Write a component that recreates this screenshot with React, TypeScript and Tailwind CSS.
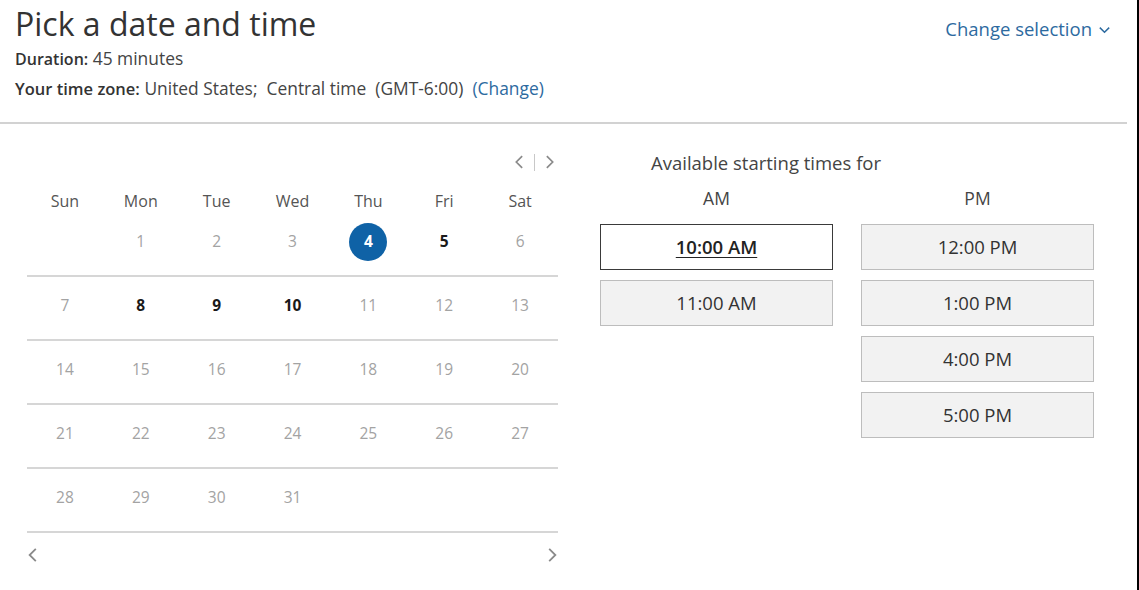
const days = ["Sun", "Mon", "Tue", "Wed", "Thu", "Fri", "Sat"];

type Cell = { n?: number; state?: "off" | "on" | "sel" };

const weeks: Cell[][] = [
  [{}, { n: 1 }, { n: 2 }, { n: 3 }, { n: 4, state: "sel" }, { n: 5, state: "on" }, { n: 6 }],
  [{ n: 7 }, { n: 8, state: "on" }, { n: 9, state: "on" }, { n: 10, state: "on" }, { n: 11 }, { n: 12 }, { n: 13 }],
  [{ n: 14 }, { n: 15 }, { n: 16 }, { n: 17 }, { n: 18 }, { n: 19 }, { n: 20 }],
  [{ n: 21 }, { n: 22 }, { n: 23 }, { n: 24 }, { n: 25 }, { n: 26 }, { n: 27 }],
  [{ n: 28 }, { n: 29 }, { n: 30 }, { n: 31 }, {}, {}, {}],
];

const am = ["10:00 AM", "11:00 AM"];
const pm = ["12:00 PM", "1:00 PM", "4:00 PM", "5:00 PM"];

function Chevron({ dir, className }: { dir: "left" | "right" | "down"; className?: string }) {
  const d =
    dir === "left" ? "M10.5 2.5 L5 8 L10.5 13.5" : dir === "right" ? "M5.5 2.5 L11 8 L5.5 13.5" : "M3 6 L8 11 L13 6";
  return (
    <svg viewBox="0 0 16 16" className={className} fill="none" stroke="currentColor" strokeWidth={1.6}>
      <path d={d} />
    </svg>
  );
}

function TimeButton({ label, selected }: { label: string; selected?: boolean }) {
  return (
    <button
      className={
        selected
          ? "h-[46px] w-[233px] border border-[#3a3a3a] bg-white text-[18.5px] font-semibold text-[#222] underline underline-offset-[3px]"
          : "h-[46px] w-[233px] border border-[#bdbdbd] bg-[#f2f2f2] text-[18.5px] text-[#333]"
      }
    >
      {label}
    </button>
  );
}

export default function App() {
  return (
    <div className="h-[590px] w-[1139px] overflow-hidden border-r-2 border-black bg-white font-['Open_Sans',sans-serif] text-[#333]">
      <header className="flex justify-between pl-[15px] pr-[25px] pt-[3px]">
        <div>
          <h1 className="text-[32px] leading-[42px] text-[#333]">Pick a date and time</h1>
          <p className="mt-[1px] text-[17.4px] leading-[24px] text-[#444]">
            <span className="text-[16px] font-semibold text-[#333]">Duration:</span> 45 minutes
          </p>
          <p className="mt-[5px] whitespace-pre text-[17.4px] leading-[24px] text-[#444]">
            <span className="text-[16.5px] font-semibold text-[#333]">Your time zone:</span>
            {" United States;  Central time  (GMT-6:00)  "}
            <span className="text-[#2d6a9f]">(Change)</span>
          </p>
        </div>
        <div className="mt-[14px] flex h-[24px] items-center gap-[5px] text-[18.5px] text-[#2d6a9f]">
          <span>Change selection</span>
          <Chevron dir="down" className="h-[15px] w-[15px]" />
        </div>
      </header>

      <div className="mr-[10px] mt-[21px] h-[2px] bg-[#d2d2d2]" />

      <main className="flex pt-[27px]">
        <section className="ml-[27px] w-[531px]">
          <div className="-mt-[1px] flex h-[24px] items-center justify-end gap-[6px] text-[#8a8a8a]">
            <Chevron dir="left" className="h-[22px] w-[17px]" />
            <span className="h-[17px] w-px bg-[#c8c8c8]" />
            <Chevron dir="right" className="h-[22px] w-[17px]" />
          </div>
          <div className="mt-[15px] grid h-[24px] grid-cols-7 items-center text-center text-[16px] text-[#555]">
            {days.map((d) => (
              <span key={d}>{d}</span>
            ))}
          </div>
          {weeks.map((w, i) => (
            <div key={i} className="grid h-[64px] grid-cols-7 border-b-2 border-[#d6d6d6] pb-[5px] text-[15.5px]">
              {w.map((c, j) => (
                <div key={j} className="flex items-center justify-center">
                  {c.n === undefined ? null : c.state === "sel" ? (
                    <span className="flex h-[38px] w-[38px] items-center justify-center rounded-full bg-[#0f62a6] font-bold text-white">
                      {c.n}
                    </span>
                  ) : c.state === "on" ? (
                    <span className="font-bold text-[#1a1a1a]">{c.n}</span>
                  ) : (
                    <span className="text-[#a3a3a3]">{c.n}</span>
                  )}
                </div>
              ))}
            </div>
          ))}
          <div className="flex h-[44px] items-center justify-between text-[#8a8a8a]">
            <Chevron dir="left" className="-ml-[3px] h-[22px] w-[18px]" />
            <Chevron dir="right" className="-mr-[3px] h-[22px] w-[18px]" />
          </div>
        </section>

        <section className="ml-[42px]">
          <p className="ml-[51px] h-[24px] text-[18.5px] leading-[24px] text-[#444]">Available starting times for</p>
          <div className="mt-[12px] flex gap-[28px]">
            <div className="flex w-[233px] flex-col gap-[10px]">
              <p className="mb-[5px] text-center text-[17.5px] leading-[22px] text-[#444]">AM</p>
              {am.map((t, i) => (
                <TimeButton key={t} label={t} selected={i === 0} />
              ))}
            </div>
            <div className="flex w-[233px] flex-col gap-[10px]">
              <p className="mb-[5px] text-center text-[17.5px] leading-[22px] text-[#444]">PM</p>
              {pm.map((t) => (
                <TimeButton key={t} label={t} />
              ))}
            </div>
          </div>
        </section>
      </main>
    </div>
  );
}
